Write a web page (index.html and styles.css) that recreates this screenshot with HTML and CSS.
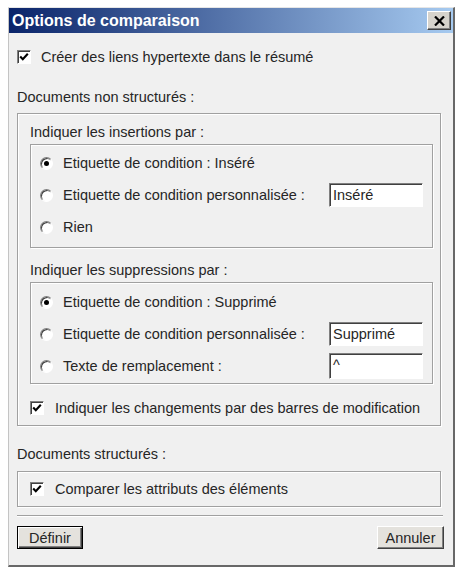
FILE: index.html
```html
<!DOCTYPE html>
<html lang="fr">
<head>
<meta charset="utf-8">
<title>Options de comparaison</title>
<link rel="stylesheet" href="styles.css">
</head>
<body>
<div class="window">
  <div class="titlebar">
    <span class="title">Options de comparaison</span>
    <span class="close"><svg width="11" height="10" viewBox="0 0 11 10"><path d="M1 0.5 L10 9.5 M10 0.5 L1 9.5" stroke="#000" stroke-width="2.2" fill="none"/></svg></span>
  </div>
  <div class="content">
    <div class="row first-row"><span class="cb"><svg width="12" height="12" viewBox="0 0 12 12"><path d="M2.2 5.5 L4.8 8.2 L9.8 2.8" fill="none" stroke="#000" stroke-width="2.1"/></svg></span><span>Créer des liens hypertexte dans le résumé</span></div>
    <div class="heading docs1">Documents non structurés :</div>
    <div class="group outer1">
      <div class="sublabel sub1">Indiquer les insertions par :</div>
      <div class="group inner ins">
        <div class="row radio-row"><span class="rb on"></span><span>Etiquette de condition : Inséré</span></div>
        <div class="row radio-row"><span class="rb"></span><span>Etiquette de condition personnalisée :</span><span class="field">Inséré</span></div>
        <div class="row radio-row"><span class="rb"></span><span>Rien</span></div>
      </div>
      <div class="sublabel sub2">Indiquer les suppressions par :</div>
      <div class="group inner del">
        <div class="row radio-row"><span class="rb on"></span><span>Etiquette de condition : Supprimé</span></div>
        <div class="row radio-row"><span class="rb"></span><span>Etiquette de condition personnalisée :</span><span class="field">Supprimé</span></div>
        <div class="row radio-row"><span class="rb"></span><span>Texte de remplacement :</span><span class="field field-tall">^</span></div>
      </div>
      <div class="row change-row"><span class="cb"><svg width="12" height="12" viewBox="0 0 12 12"><path d="M2.2 5.5 L4.8 8.2 L9.8 2.8" fill="none" stroke="#000" stroke-width="2.1"/></svg></span><span>Indiquer les changements par des barres de modification</span></div>
    </div>
    <div class="heading docs2">Documents structurés :</div>
    <div class="group outer2">
      <div class="row"><span class="cb"><svg width="12" height="12" viewBox="0 0 12 12"><path d="M2.2 5.5 L4.8 8.2 L9.8 2.8" fill="none" stroke="#000" stroke-width="2.1"/></svg></span><span>Comparer les attributs des éléments</span></div>
    </div>
    <div class="separator"></div>
    <div class="buttons">
      <span class="btn btn-default">Définir</span>
      <span class="btn btn-cancel">Annuler</span>
    </div>
  </div>
</div>
</body>
</html>
```
FILE: styles.css
```css
html, body {
  margin: 0;
  background: #ffffff;
}
body {
  font-family: "Liberation Sans", Arial, sans-serif;
  font-size: 14.5px;
  color: #262626;
}
.window {
  margin: 7px 0 0 8px;
  width: 447px;
  height: 560px;
  box-sizing: border-box;
  background: #f0f0f0;
  border-top: 1px solid #e6e6e6;
  border-left: 1px solid #c4c4c4;
  border-right: 2px solid #686868;
  border-bottom: 2px solid #686868;
  display: flex;
  flex-direction: column;
}
.titlebar {
  height: 25px;
  flex: none;
  background: linear-gradient(to right, #0a246a, #a6caf0);
  display: flex;
  align-items: center;
  justify-content: space-between;
  padding: 0 2px 0 3px;
}
.title {
  color: #ffffff;
  font-weight: bold;
  font-size: 16px;
}
.close {
  width: 24px;
  height: 19px;
  box-sizing: border-box;
  background: #d6d3cc;
  border: 1px solid;
  border-color: #ffffff #404040 #404040 #ffffff;
  box-shadow: inset -1px -1px 0 #808080;
  display: flex;
  align-items: center;
  justify-content: center;
}
.content {
  padding: 0 12px 0 8px;
}
.row {
  display: flex;
  align-items: center;
}
.first-row {
  height: 48px;
}
.cb {
  width: 14px;
  height: 14px;
  box-sizing: border-box;
  flex: none;
  background: #ffffff;
  border: 1px solid;
  border-color: #808080 #ffffff #ffffff #808080;
  box-shadow: inset 1px 1px 0 #404040;
  display: flex;
  align-items: center;
  justify-content: center;
  margin-right: 10px;
}
.heading {
  line-height: 16px;
  box-sizing: border-box;
}
.docs1 {
  height: 32px;
  padding-top: 8px;
}
.docs2 {
  height: 45px;
  padding-top: 20px;
}
.group {
  border: 1px solid #a0a0a0;
  box-shadow: inset 1px 1px 0 #ffffff, 1px 1px 0 #ffffff;
}
.outer1 {
  padding: 0 7px 1px 12px;
}
.sublabel {
  line-height: 16px;
  box-sizing: border-box;
}
.sub1 {
  height: 30px;
  padding-top: 10px;
}
.sub2 {
  height: 34px;
  padding-top: 14px;
}
.ins {
  padding: 2px 9px 4px 9px;
}
.del {
  padding: 3px 9px 1px 9px;
}
.radio-row {
  height: 32px;
}
.rb {
  width: 13px;
  height: 13px;
  box-sizing: border-box;
  flex: none;
  border-radius: 50%;
  background: #ffffff;
  border: 1px solid;
  border-color: #808080 #ffffff #ffffff #808080;
  box-shadow: inset 1px 1px 0 #404040;
  margin-right: 10px;
  display: flex;
  align-items: center;
  justify-content: center;
}
.rb.on::after {
  content: "";
  width: 5px;
  height: 5px;
  border-radius: 50%;
  background: #000000;
}
.field {
  margin-left: auto;
  width: 94px;
  height: 24px;
  box-sizing: border-box;
  background: #ffffff;
  border: 1px solid;
  border-color: #808080 #ffffff #ffffff #808080;
  box-shadow: inset 1px 1px 0 #404040;
  padding: 3px 0 0 3px;
  line-height: 16px;
  color: #262626;
}
.field-tall {
  height: 26px;
}
.change-row {
  height: 32px;
  margin-top: 8px;
}
.change-row .cb {
  margin-right: 11px;
}
.outer2 {
  height: 36px;
  box-sizing: border-box;
  padding-left: 12px;
  display: flex;
  align-items: center;
}
.outer2 .cb {
  margin-right: 11px;
}
.separator {
  margin: 8px -2px 0 0;
  border-top: 1px solid #a0a0a0;
  border-bottom: 1px solid #ffffff;
}
.buttons {
  margin: 9px -3px 0 0;
  display: flex;
  justify-content: space-between;
}
.btn {
  height: 23px;
  box-sizing: border-box;
  background: #e4e2dd;
  display: flex;
  align-items: center;
  justify-content: center;
  color: #262626;
}
.btn-default {
  width: 66px;
  border: 1px solid #000000;
  box-shadow: inset 1px 1px 0 #ffffff, inset -1px -1px 0 #404040, inset -2px -2px 0 #808080;
}
.btn-cancel {
  width: 67px;
  border: 1px solid;
  border-color: #ffffff #404040 #404040 #ffffff;
  box-shadow: inset -1px -1px 0 #808080;
}
```
